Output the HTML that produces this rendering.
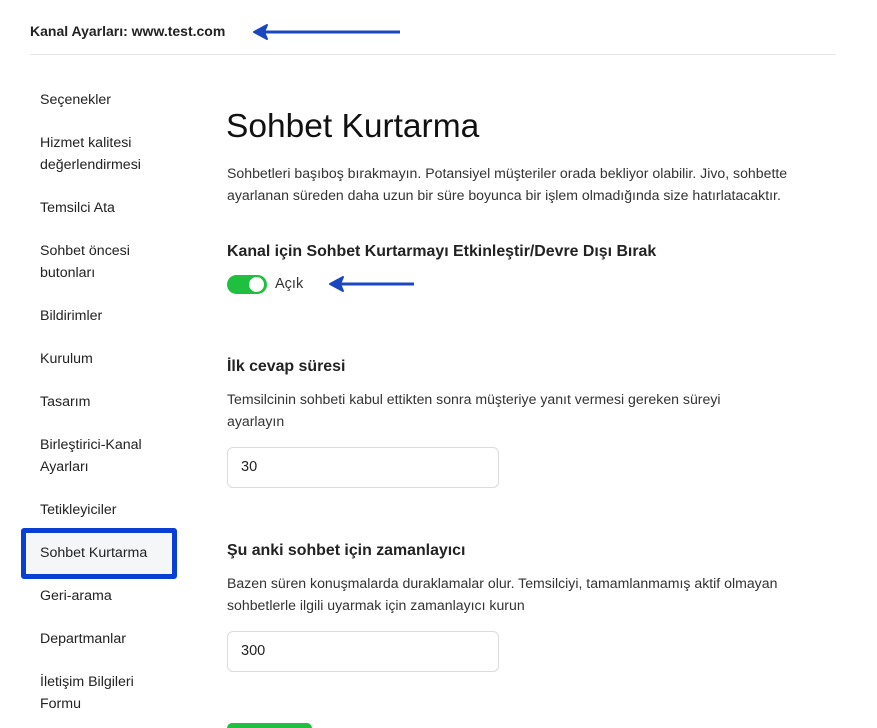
<!DOCTYPE html>
<html><head><meta charset="utf-8"><style>
html,body{margin:0;width:877px;height:728px;overflow:hidden}
body{background:#fff;font-family:"Liberation Sans","DejaVu Sans",sans-serif;color:#222;position:relative}
.a{position:absolute;white-space:nowrap}
.s{font-size:14.2px;color:#222;line-height:22px;left:40px}
.d{font-size:14.1px;color:#333;line-height:22px;left:227px}
.h{font-size:15.9px;font-weight:bold;color:#222;left:227px}
.inp{position:absolute;left:227px;width:272px;height:41px;border:1px solid #dcdcdc;border-radius:6px;box-sizing:border-box;font-size:14.5px;line-height:39px;padding-left:13px}
</style></head><body>
<div class="a" style="left:30px;top:23px;font-size:14px;font-weight:bold;color:#222">Kanal Ayarları: www.test.com</div>
<div class="a" style="left:30px;top:54px;width:806px;height:1px;background:#e6e6e6"></div>
<svg class="a" style="left:250px;top:22px" width="160" height="20"><path d="M150 10 H14" stroke="#1a47c0" stroke-width="3"/><path d="M4 10 L17 3 L14 10 L17 17Z" fill="#1a47c0" stroke="#1a47c0" stroke-width="2" stroke-linejoin="round"/></svg>
<svg class="a" style="left:326px;top:274px" width="95" height="20"><path d="M88 10 H14" stroke="#1a47c0" stroke-width="3"/><path d="M4 10 L17 3 L14 10 L17 17Z" fill="#1a47c0" stroke="#1a47c0" stroke-width="2" stroke-linejoin="round"/></svg>

<div class="a s" style="top:89px">Seçenekler</div>
<div class="a s" style="top:132px">Hizmet kalitesi<br>değerlendirmesi</div>
<div class="a s" style="top:197px">Temsilci Ata</div>
<div class="a s" style="top:240px">Sohbet öncesi<br>butonları</div>
<div class="a s" style="top:305px">Bildirimler</div>
<div class="a s" style="top:348px">Kurulum</div>
<div class="a s" style="top:391px">Tasarım</div>
<div class="a s" style="top:434px">Birleştirici-Kanal<br>Ayarları</div>
<div class="a s" style="top:499px">Tetikleyiciler</div>
<div class="a" style="left:21px;top:528px;width:156px;height:51px;box-sizing:border-box;border:5px solid #0a3fd6;border-radius:3px;background:#f5f6f7"></div>
<div class="a s" style="top:542px">Sohbet Kurtarma</div>
<div class="a s" style="top:585px">Geri-arama</div>
<div class="a s" style="top:628px">Departmanlar</div>
<div class="a s" style="top:671px">İletişim Bilgileri<br>Formu</div>

<div class="a" style="left:226px;top:108px;font-size:33.5px;color:#111">Sohbet Kurtarma</div>
<div class="a d" style="top:162px">Sohbetleri başıboş bırakmayın. Potansiyel müşteriler orada bekliyor olabilir. Jivo, sohbette<br>ayarlanan süreden daha uzun bir süre boyunca bir işlem olmadığında size hatırlatacaktır.</div>
<div class="a h" style="top:243px">Kanal için Sohbet Kurtarmayı Etkinleştir/Devre Dışı Bırak</div>
<div class="a" style="left:227px;top:275px;width:40px;height:19px;border-radius:10px;background:#1fbf3f"></div>
<div class="a" style="left:249px;top:277px;width:15px;height:15px;border-radius:50%;background:#fff"></div>
<div class="a" style="left:275px;top:276px;font-size:14.5px;color:#333">Açık</div>

<div class="a h" style="top:358px">İlk cevap süresi</div>
<div class="a d" style="top:388px">Temsilcinin sohbeti kabul ettikten sonra müşteriye yanıt vermesi gereken süreyi<br>ayarlayın</div>
<div class="inp" style="top:447px">30</div>

<div class="a h" style="top:542px">Şu anki sohbet için zamanlayıcı</div>
<div class="a d" style="top:572px">Bazen süren konuşmalarda duraklamalar olur. Temsilciyi, tamamlanmamış aktif olmayan<br>sohbetlerle ilgili uyarmak için zamanlayıcı kurun</div>
<div class="inp" style="top:631px">300</div>
<div class="a" style="left:227px;top:723px;width:85px;height:5px;border-radius:6px 6px 0 0;background:#1fbf3f"></div>
</body></html>
